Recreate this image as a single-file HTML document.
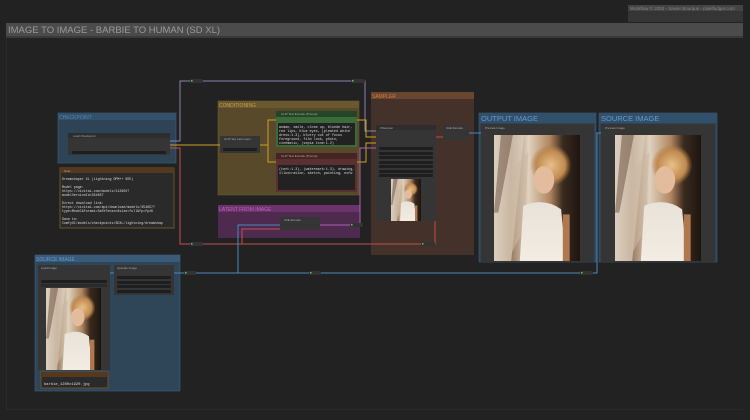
<!DOCTYPE html>
<html><head><meta charset="utf-8"><style>
html,body{margin:0;padding:0;background:#222;width:750px;height:420px;overflow:hidden}
svg{display:block}
text{font-family:"Liberation Sans",sans-serif}
.m text,text.m{font-family:"Liberation Mono",monospace}
</style></head><body>
<svg width="750" height="420" viewBox="0 0 750 420" xmlns="http://www.w3.org/2000/svg">
<defs>
<linearGradient id="ph" x1="0" y1="0" x2="1" y2="0">
<stop offset="0" stop-color="#d9cbb8"/><stop offset="0.2" stop-color="#9a7a60"/><stop offset="0.4" stop-color="#e0d2bf"/><stop offset="0.65" stop-color="#b08660"/><stop offset="0.8" stop-color="#3a2a1e"/><stop offset="1" stop-color="#1e1510"/>
</linearGradient>
<radialGradient id="hair" cx="0.5" cy="0.5" r="0.5"><stop offset="0" stop-color="#e8c088"/><stop offset="0.7" stop-color="#c08a50"/><stop offset="1" stop-color="#b07a45" stop-opacity="0"/></radialGradient>
<linearGradient id="dress" x1="0" y1="0" x2="0" y2="1"><stop offset="0" stop-color="#e8e2d8"/><stop offset="1" stop-color="#f2ece2"/></linearGradient>
<g id="photo">
<rect x="0" y="0" width="100" height="146" fill="url(#ph)"/>
<path d="M0 0 L35 0 L20 146 L0 146 Z" fill="#ddd0bf" opacity="0.7"/>
<path d="M8 0 L22 0 L5 90 L0 90 Z" fill="#5a4030" opacity="0.45"/>
<path d="M20 40 L40 20 L35 110 L15 146 Z" fill="#cbb9a4" opacity="0.6"/>
<ellipse cx="66" cy="35" rx="24" ry="24" fill="url(#hair)"/>
<ellipse cx="58" cy="52" rx="12" ry="16" fill="#e2bc9c"/>
<path d="M34 82 Q58 72 78 86 L84 146 L30 146 Z" fill="url(#dress)"/>
<rect x="80" y="92" width="8" height="54" fill="#b07850"/>
</g>
</defs>

<!-- watermark -->
<rect x="628" y="5" width="115" height="17" fill="#353535"/>
<rect x="628" y="5" width="115" height="6" fill="#444"/>
<text x="630" y="10" font-size="4.5" fill="#888">Workflow © 2024 - Xavier Bourque - pixelfudger.com</text>

<!-- title -->
<rect x="6" y="23" width="737" height="15" fill="#3a3a3a"/>
<rect x="6" y="23" width="737" height="13" fill="#4b4b4b"/>
<text x="8" y="33" font-size="9.5" fill="#9a9a9a">IMAGE TO IMAGE - BARBIE TO HUMAN (SD XL)</text>
<rect x="6" y="38" width="0.8" height="372" fill="#2c2c2c"/>
<rect x="6" y="409" width="737" height="0.8" fill="#2c2c2c"/>

<!-- groups -->
<rect x="58" y="113" width="118" height="50" fill="#2e4456" stroke="#3e5e7a" stroke-width="0.6"/>
<rect x="58" y="113" width="118" height="7" fill="#35506a"/>
<text x="59" y="119" font-size="5" fill="#4d86b8">CHECKPOINT</text>

<rect x="218" y="101" width="141" height="94" fill="#57492a" stroke="#6a5830" stroke-width="0.6"/>
<rect x="218" y="101" width="141" height="7" fill="#6a5830"/>
<text x="219" y="107" font-size="5" fill="#c8a040">CONDITIONING</text>

<rect x="218" y="205" width="142" height="33" fill="#4f2a4f"/>
<rect x="218" y="205" width="142" height="7" fill="#6a346a"/>
<text x="219" y="211" font-size="5" fill="#c060c0">LATENT FROM IMAGE</text>

<rect x="371" y="92" width="103" height="163" fill="#44312a"/>
<rect x="371" y="92" width="103" height="7" fill="#6a4530"/>
<text x="372" y="98" font-size="5" fill="#d07a40">SAMPLER</text>

<rect x="479" y="113" width="117" height="149" fill="#2e4456" stroke="#3e6080" stroke-width="0.6"/>
<rect x="479" y="113" width="117" height="10" fill="#33506b"/>
<text x="481" y="121" font-size="7.5" fill="#5d9bd0">OUTPUT IMAGE</text>
<rect x="599" y="113" width="118" height="149" fill="#2e4456" stroke="#3e6080" stroke-width="0.6"/>
<rect x="599" y="113" width="118" height="10" fill="#33506b"/>
<text x="601" y="121" font-size="7.5" fill="#5d9bd0">SOURCE IMAGE</text>

<rect x="35" y="255" width="145" height="136" fill="#2f4659" stroke="#3e6080" stroke-width="0.6"/>
<rect x="35" y="255" width="145" height="7" fill="#3a5a78"/>
<text x="36" y="261" font-size="5" fill="#5d9bd0">SOURCE IMAGE</text>

<!-- wires -->
<g fill="none" stroke-width="1">
<path d="M170 141 H180 V81 H365 V131 H376" stroke="#8a82b0"/>
<path d="M170 148 H180 V244 H435 V137 H443" stroke="#c05050"/>
<path d="M170 145 H220" stroke="#d0a020"/>
<path d="M260 145 H268 V120 H276 M268 145 V162 H276" stroke="#d0a020"/>
<path d="M357 120 H366 V137 H376" stroke="#d0a020"/>
<path d="M357 162 H366 V143 H376" stroke="#d0a020"/>
<path d="M110 273 H597 V133 H602" stroke="#4a88c0"/>
<path d="M238 273 V225 H280" stroke="#4a88c0"/>
<path d="M242 244 V229 H280" stroke="#c05050"/>
<path d="M320 225 H360 V148 H376" stroke="#b060b0"/>
<path d="M469 133 H482" stroke="#4a88c0"/>
</g>
<!-- reroutes -->
<g>
<rect x="190" y="79" width="13" height="4" rx="1" fill="#333"/><rect x="351" y="79" width="14" height="4" rx="1" fill="#333"/>
<rect x="190" y="242" width="13" height="4" rx="1" fill="#333"/><rect x="421" y="242" width="14" height="4" rx="1" fill="#333"/>
<rect x="184" y="271" width="12" height="4" rx="1" fill="#333"/><rect x="309" y="271" width="12" height="4" rx="1" fill="#333"/>
<rect x="580" y="271" width="13" height="4" rx="1" fill="#333"/><rect x="350" y="223" width="13" height="4" rx="1" fill="#333"/>
</g>
<g fill="#5c5">
<rect x="191" y="80" width="1.5" height="1.5"/><rect x="352" y="80" width="1.5" height="1.5"/><rect x="191" y="243" width="1.5" height="1.5"/><rect x="422" y="243" width="1.5" height="1.5"/><rect x="185" y="272" width="1.5" height="1.5"/><rect x="310" y="272" width="1.5" height="1.5"/><rect x="581" y="272" width="1.5" height="1.5"/><rect x="351" y="224" width="1.5" height="1.5"/>
</g>

<!-- checkpoint node -->
<rect x="68" y="133" width="102" height="22" fill="#353535"/>
<rect x="68" y="133" width="102" height="5" fill="#2d2d2d"/>
<text x="73" y="137" font-size="3" fill="#aaa">Load Checkpoint</text>
<rect x="72" y="151" width="94" height="3" rx="1" fill="#1e1e1e"/>
<!-- note -->
<rect x="60" y="168" width="114" height="60" fill="#2a2a2a" stroke="#6a5428" stroke-width="1"/>
<rect x="60" y="168" width="114" height="5" fill="#55391f"/>
<text x="64" y="172" font-size="3" fill="#aaa">Note</text>
<g class="m" font-size="3.3" fill="#ddd">
<text x="62" y="180">Dreamshaper XL (Lightning DPM++ SDE)</text>
<text x="62" y="188">Model page:</text>
<text x="62" y="192">https://civitai.com/models/112902?</text>
<text x="62" y="196">modelVersionId=354657</text>
<text x="62" y="204">Direct download link:</text>
<text x="62" y="208">https://civitai.com/api/download/models/354657?</text>
<text x="62" y="212">type=Model&amp;format=SafeTensor&amp;size=full&amp;fp=fp16</text>
<text x="62" y="220">Save to:</text>
<text x="62" y="224">ComfyUI/models/checkpoints/SDXL/lightning/dreamshap</text>
</g>

<!-- clip set last layer -->
<rect x="220" y="136" width="40" height="17" fill="#353535"/>
<text x="224" y="140" font-size="3" fill="#aaa">CLIP Set Last Layer</text>
<rect x="223" y="148" width="34" height="3" rx="1" fill="#1e1e1e"/>
<!-- positive -->
<rect x="276" y="111" width="81" height="36" fill="#3b6a3b"/>
<rect x="276" y="111" width="81" height="6" fill="#264426"/>
<text x="281" y="115" font-size="3" fill="#aaa">CLIP Text Encode (Prompt)</text>
<rect x="278" y="123" width="77" height="22" fill="#222"/>
<g class="m" font-size="3.4" fill="#ddd">
<text x="279" y="128">woman, smile, close up, blonde hair,</text>
<text x="279" y="132">red lips, blue eyes, (pleated white</text>
<text x="279" y="136">dress:1.3), blurry out of focus</text>
<text x="279" y="140">foreground, film look, photo,</text>
<text x="279" y="144">cinematic, (sepia tone:1.2)</text>
</g>
<!-- negative -->
<rect x="276" y="153" width="81" height="39" fill="#5a3030"/>
<rect x="276" y="153" width="81" height="6" fill="#442424"/>
<text x="281" y="157" font-size="3" fill="#aaa">CLIP Text Encode (Prompt)</text>
<rect x="278" y="165" width="77" height="25" fill="#222"/>
<g class="m" font-size="3.4" fill="#ddd">
<text x="279" y="170">(text:1.3), (watermark:1.3), drawing,</text>
<text x="279" y="174">illustration, sketch, painting, nsfw</text>
</g>
<!-- vae encode -->
<rect x="280" y="217" width="40" height="13" fill="#353535"/>
<text x="284" y="221" font-size="3" fill="#aaa">VAE Encode</text>

<!-- ksampler -->
<rect x="376" y="125" width="60" height="96" fill="#353535"/>
<rect x="376" y="125" width="60" height="5" fill="#2d2d2d"/>
<text x="380" y="129" font-size="3" fill="#aaa">KSampler</text>
<g fill="#1e1e1e"><rect x="379" y="147" width="54" height="3" rx="1"/><rect x="379" y="152" width="54" height="3" rx="1"/><rect x="379" y="156" width="54" height="3" rx="1"/><rect x="379" y="161" width="54" height="3" rx="1"/><rect x="379" y="165" width="54" height="3" rx="1"/><rect x="379" y="170" width="54" height="3" rx="1"/><rect x="379" y="174" width="54" height="3" rx="1"/></g>
<svg x="391" y="179" width="30" height="42" viewBox="0 0 100 146" preserveAspectRatio="none"><use href="#photo"/></svg>
<rect x="443" y="125" width="26" height="15" fill="#353535"/>
<text x="446" y="129" font-size="3" fill="#aaa">VAE Decode</text>

<!-- preview nodes -->
<rect x="481" y="124" width="113" height="138" fill="#353535"/>
<text x="485" y="129" font-size="3" fill="#aaa">Preview Image</text>
<svg x="494" y="135" width="86" height="126" viewBox="0 0 100 146" preserveAspectRatio="none"><use href="#photo"/></svg>
<rect x="601" y="124" width="114" height="138" fill="#353535"/>
<text x="605" y="129" font-size="3" fill="#aaa">Preview Image</text>
<svg x="615" y="135" width="86" height="126" viewBox="0 0 100 146" preserveAspectRatio="none"><use href="#photo"/></svg>

<!-- load image -->
<rect x="38" y="265" width="72" height="105" fill="#353535"/>
<text x="41" y="269" font-size="3" fill="#aaa">Load Image</text>
<rect x="41" y="280" width="66" height="3" rx="1" fill="#1e1e1e"/>
<rect x="41" y="284" width="66" height="3" fill="#2a2a2a"/>
<svg x="46" y="288" width="55" height="82" viewBox="0 0 100 146" preserveAspectRatio="none"><use href="#photo"/></svg>
<rect x="114" y="265" width="60" height="30" fill="#353535"/>
<text x="117" y="269" font-size="3" fill="#aaa">Upscale Image</text>
<g fill="#1e1e1e"><rect x="117" y="276" width="54" height="3" rx="1"/><rect x="117" y="281" width="54" height="3" rx="1"/><rect x="117" y="285" width="54" height="3" rx="1"/><rect x="117" y="290" width="54" height="3" rx="1"/></g>
<rect x="41" y="372" width="67" height="16" fill="#2a2a2a" stroke="#6a5428" stroke-width="1"/>
<rect x="41" y="372" width="67" height="5" fill="#55391f"/>
<text class="m" x="44" y="385" font-size="3.8" fill="#ddd">barbie_1280x1920.jpg</text>
</svg>
</body></html>
